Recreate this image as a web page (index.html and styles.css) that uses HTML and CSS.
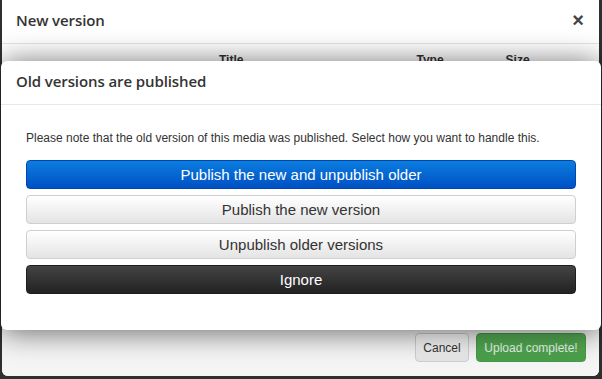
FILE: index.html
```html
<!DOCTYPE html>
<html>
<head>
<meta charset="utf-8">
<link rel="stylesheet" href="styles.css">
</head>
<body>
<div class="outer">
  <div class="outer-header">
    <h3 class="title">New version</h3>
    <span class="close">×</span>
  </div>
  <div class="outer-body">
    <div class="thead">
      <span class="th th-title">Title</span>
      <span class="th th-type">Type</span>
      <span class="th th-size">Size</span>
    </div>
  </div>
  <div class="outer-footer">
    <button class="btn btn-default btn-small">Cancel</button>
    <button class="btn btn-success btn-small">Upload complete!</button>
  </div>

  <div class="inner">
    <div class="inner-header">
      <h3 class="title">Old versions are published</h3>
    </div>
    <div class="inner-body">
      <p class="note">Please note that the old version of this media was published. Select how you want to handle this.</p>
      <div class="choices">
        <button class="btn btn-primary btn-block">Publish the new and unpublish older</button>
        <button class="btn btn-default btn-block">Publish the new version</button>
        <button class="btn btn-default btn-block">Unpublish older versions</button>
        <button class="btn btn-inverse btn-block">Ignore</button>
      </div>
    </div>
  </div>
</div>
</body>
</html>
```

FILE: styles.css
```css
html, body {
  margin: 0;
  padding: 0;
}
body {
  background: #2f2f2f;
  width: 602px;
  height: 379px;
  overflow: hidden;
  font-family: "Liberation Sans", Arial, sans-serif;
  color: #333;
}
.outer {
  position: relative;
  margin: 0 3px 0 2px;
  height: 376px;
  background: #fff;
  border-radius: 0 0 6px 6px;
  display: flex;
  flex-direction: column;
}
.outer-header {
  border-bottom: 1px solid #e5e5e5;
  padding: 0 15px 3px 14px;
  box-sizing: border-box;
  height: 44px;
  display: flex;
  align-items: center;
  justify-content: space-between;
}
.title {
  margin: 0;
  font-family: "Open Sans", "Noto Sans", sans-serif;
  font-weight: 600;
  font-size: 15px;
  line-height: 20px;
  color: #333;
  letter-spacing: -0.1px;
}
.close {
  font-family: "Liberation Sans", Arial, sans-serif;
  font-weight: bold;
  font-size: 20px;
  line-height: 20px;
  color: #444;
}
.outer-body {
  flex: 1;
  position: relative;
}
.thead {
  display: flex;
  padding-top: 9px;
  font-size: 12px;
  font-weight: bold;
  color: #333;
}
.th-title { margin-left: 217px; }
.th-type { margin-left: 173px; }
.th-size { margin-left: 62px; }
.outer-footer {
  background: #f5f5f5;
  padding: 14px 13px 14px;
  display: flex;
  justify-content: flex-end;
  gap: 7px;
  border-radius: 0 0 6px 6px;
}
.btn {
  font-family: "Liberation Sans", Arial, sans-serif;
  border-radius: 4px;
  cursor: pointer;
  box-sizing: border-box;
  height: 29px;
  padding: 0 10px;
  margin: 0;
  white-space: nowrap;
}
.btn-small {
  font-size: 12px;
}
.btn-default {
  background: linear-gradient(#ffffff, #e4e4e4);
  border: 1px solid #cfcfcf;
  color: #333;
}
.btn-success {
  background: linear-gradient(#55ae55, #4a9e4a);
  border: 1px solid #469a46;
  color: #eaf6ea;
  padding: 0;
  width: 110px;
}
.btn-small.btn-default {
  padding: 0;
  width: 54px;
}
.inner {
  position: absolute;
  left: -1px;
  top: 61px;
  width: 600px;
  height: 269px;
  background: #fff;
  border-radius: 6px;
  box-shadow: 0 2px 30px rgba(0, 0, 0, 0.6);
}
.inner-header {
  height: 44px;
  box-sizing: border-box;
  border-bottom: 1px solid #e8e8e8;
  padding: 0 15px 3px;
  display: flex;
  align-items: center;
}
.inner-body {
  padding: 24px 25px 0;
}
.note {
  margin: 0;
  font-size: 12px;
  line-height: 18px;
  color: #333;
}
.choices {
  margin-top: 13px;
  display: flex;
  flex-direction: column;
  gap: 6px;
}
.btn-block {
  width: 100%;
  font-size: 15px;
}
.btn-primary {
  background: linear-gradient(#0b7ddf, #0050c4);
  border: 1px solid #0048b0;
  color: #fff;
}
.btn-inverse {
  background: linear-gradient(#444444, #222222);
  border: 1px solid #1e1e1e;
  color: #fff;
}
```
